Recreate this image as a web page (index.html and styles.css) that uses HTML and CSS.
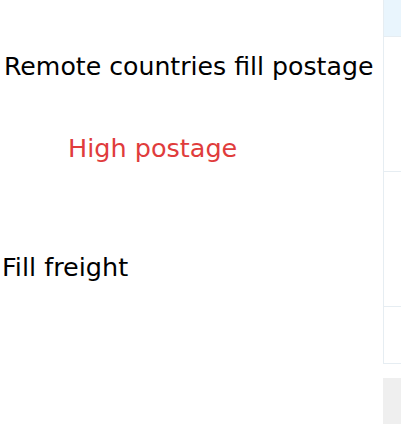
FILE: index.html
```html
<!DOCTYPE html>
<html lang="en">
<head>
  <meta charset="UTF-8" />
  <meta name="viewport" content="width=device-width, initial-scale=1.0" />
  <title>Postage</title>
  <link rel="stylesheet" href="styles.css">
</head>
<body>
  <div class="page">
    <div class="notes">
      <p class="note note-title">Remote countries fill postage</p>
      <p class="note note-warn">High postage</p>
      <p class="note note-fill">Fill freight</p>
    </div>
    <div class="side">
      <div class="side-table">
        <div class="side-head"></div>
        <div class="side-row"></div>
        <div class="side-row"></div>
        <div class="side-row side-row-last"></div>
      </div>
      <div class="side-foot"></div>
    </div>
  </div>
</body>
</html>
```

FILE: styles.css
```css
body {
  margin: 0;
  font-family: "DejaVu Sans", sans-serif;
  background: #fff;
  overflow: hidden;
}

.page {
  display: flex;
  width: 401px;
  height: 424px;
}

.notes {
  width: 383px;
  flex-shrink: 0;
  padding-top: 52px;
}

.note {
  margin: 0;
  font-size: 25.5px;
  line-height: 30px;
  color: #000;
  white-space: nowrap;
}

.note-title {
  padding-left: 4px;
  font-size: 25.2px;
}

.note-warn {
  margin-top: 51px;
  padding-left: 68px;
  color: #e03c3c;
}

.note-fill {
  margin-top: 89px;
  padding-left: 2px;
}

.side {
  flex: 1;
  min-width: 0;
}

.side-table {
  border: 1px solid #e6edf2;
  border-top: none;
  border-right: none;
}

.side-head {
  height: 36px;
  background: #e9f5fd;
  border-bottom: 1px solid #e6edf2;
}

.side-row {
  height: 134px;
  border-bottom: 1px solid #e6edf2;
}

.side-row-last {
  height: 56px;
  border-bottom: none;
}

.side-foot {
  margin-top: 14px;
  height: 60px;
  background: #efefef;
}
```
